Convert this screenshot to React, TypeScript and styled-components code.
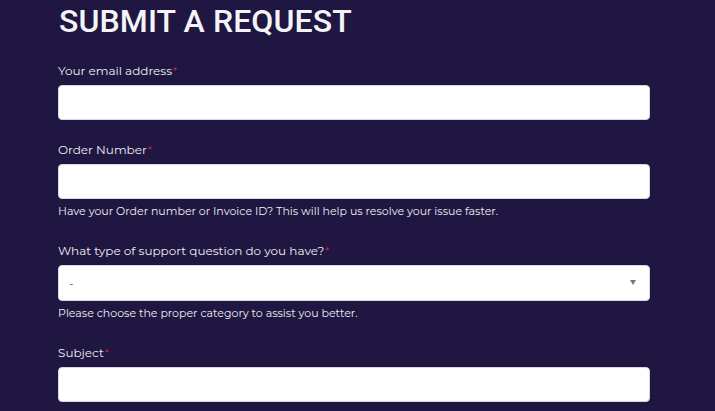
import React from "react";
import styled, { createGlobalStyle } from "styled-components";

const Global = createGlobalStyle`
  html, body { margin: 0; padding: 0; background: #1f1741; }
  * { box-sizing: border-box; }
`;

const Page = styled.div`
  width: 715px;
  height: 411px;
  overflow: hidden;
  background: #1f1741;
  padding: 0 65px 0 58px;
  font-family: "Montserrat", "DejaVu Sans", sans-serif;
`;

const Title = styled.h1`
  margin: 0;
  padding-top: 3px;
  font-family: "Roboto", sans-serif;
  font-weight: 500;
  font-size: 32px;
  line-height: 36px;
  letter-spacing: 0.1px;
  color: #f4f3f8;
  margin-left: 1px;
`;

const Form = styled.div`
  display: flex;
  flex-direction: column;
  margin-top: 24px;
`;

const Field = styled.div<{ $gap: number }>`
  display: flex;
  flex-direction: column;
  margin-bottom: ${(p) => p.$gap}px;
`;

const Label = styled.label`
  font-size: 12px;
  line-height: 15px;
  color: #eeedf3;
  margin-bottom: 7px;
`;

const Req = styled.span`
  color: #e8265f;
  font-size: 10px;
  vertical-align: top;
  margin-left: 1px;
`;

const Input = styled.div<{ $h: number }>`
  height: ${(p) => p.$h}px;
  background: #ffffff;
  border-radius: 4px;
  border: 1px solid #d8d6e0;
  position: relative;
  display: flex;
  align-items: center;
  padding-left: 10px;
  color: #555;
  font-size: 12px;
`;

const Caret = styled.span`
  position: absolute;
  right: 13px;
  top: 14px;
  width: 0;
  height: 0;
  border-left: 3px solid transparent;
  border-right: 3px solid transparent;
  border-top: 5px solid #777;
`;

const Hint = styled.div`
  font-size: 11px;
  line-height: 13px;
  color: #eeedf3;
  margin-top: 6px;
`;

export default function App() {
  return (
    <>
      <Global />
      <Page>
        <Title>SUBMIT A REQUEST</Title>
        <Form>
          <Field $gap={22}>
            <Label>Your email address<Req>*</Req></Label>
            <Input $h={35} />
          </Field>
          <Field $gap={25}>
            <Label>Order Number<Req>*</Req></Label>
            <Input $h={35} />
            <Hint>Have your Order number or Invoice ID? This will help us resolve your issue faster.</Hint>
          </Field>
          <Field $gap={25}>
            <Label>What type of support question do you have?<Req>*</Req></Label>
            <Input $h={36}>-<Caret /></Input>
            <Hint>Please choose the proper category to assist you better.</Hint>
          </Field>
          <Field $gap={0}>
            <Label>Subject<Req>*</Req></Label>
            <Input $h={35} />
          </Field>
        </Form>
      </Page>
    </>
  );
}
